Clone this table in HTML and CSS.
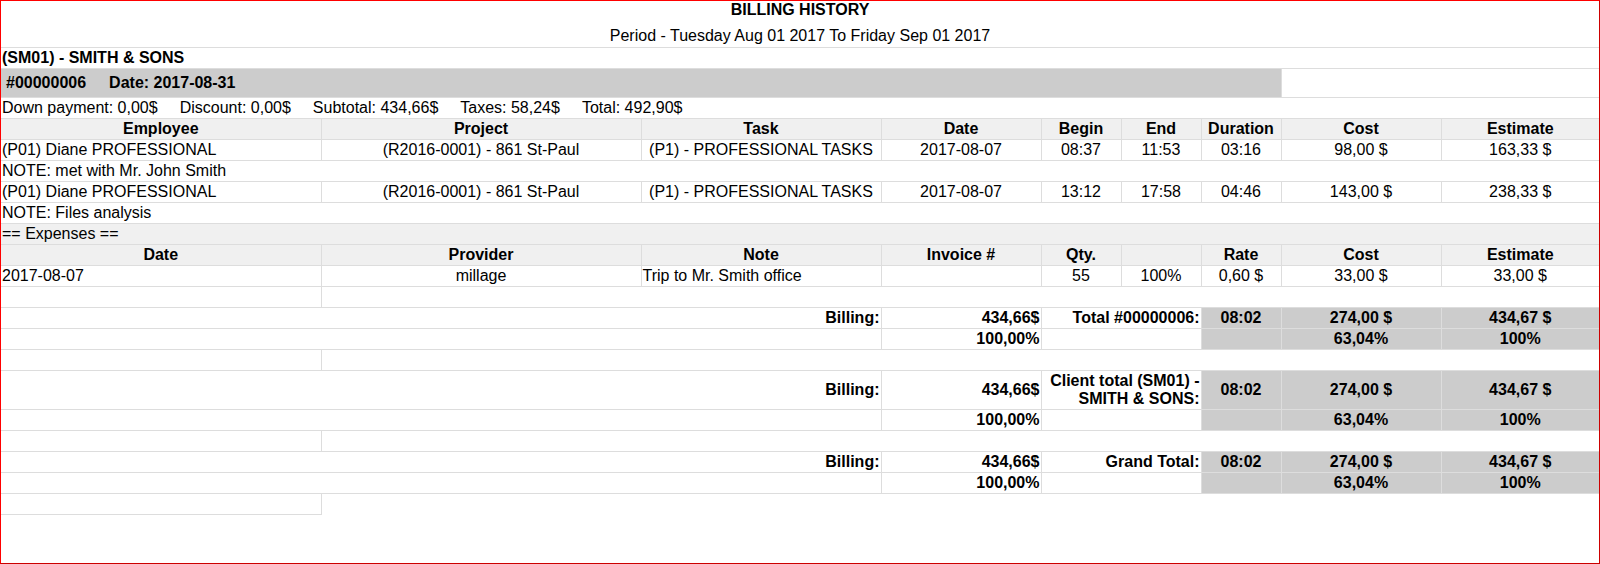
FILE: index.html
```html
<!DOCTYPE html>
<html>
<head>
<meta charset="utf-8">
<title>Billing History</title>
<link rel="stylesheet" href="styles.css">
</head>
<body>
<div class="page">
<table class="report">
  <colgroup>
    <col class="c-emp"><col class="c-proj"><col class="c-task"><col class="c-date"><col class="c-begin"><col class="c-end"><col class="c-dur"><col class="c-cost"><col class="c-est">
  </colgroup>
  <tbody>
    <tr class="title-row"><td colspan="9" class="title">BILLING HISTORY</td></tr>
    <tr class="period-row"><td colspan="9" class="period">Period - Tuesday Aug 01 2017 To Friday Sep 01 2017</td></tr>
    <tr><td colspan="9" class="client">(SM01) - SMITH &amp; SONS</td></tr>
    <tr class="invoice-row">
      <td colspan="7" class="invoice"><span class="inv-no">#00000006</span><span>Date: 2017-08-31</span></td>
      <td colspan="2"></td>
    </tr>
    <tr><td colspan="9" class="summary"><span>Down payment: 0,00$</span><span>Discount: 0,00$</span><span>Subtotal: 434,66$</span><span>Taxes: 58,24$</span><span>Total: 492,90$</span></td></tr>
    <tr class="head">
      <td>Employee</td><td>Project</td><td>Task</td><td>Date</td><td>Begin</td><td>End</td><td>Duration</td><td>Cost</td><td>Estimate</td>
    </tr>
    <tr class="line">
      <td class="left">(P01) Diane PROFESSIONAL</td><td>(R2016-0001) - 861 St-Paul</td><td>(P1) - PROFESSIONAL TASKS</td><td>2017-08-07</td><td>08:37</td><td>11:53</td><td>03:16</td><td>98,00 $</td><td>163,33 $</td>
    </tr>
    <tr><td colspan="9" class="left">NOTE: met with Mr. John Smith</td></tr>
    <tr class="line">
      <td class="left">(P01) Diane PROFESSIONAL</td><td>(R2016-0001) - 861 St-Paul</td><td>(P1) - PROFESSIONAL TASKS</td><td>2017-08-07</td><td>13:12</td><td>17:58</td><td>04:46</td><td>143,00 $</td><td>238,33 $</td>
    </tr>
    <tr><td colspan="9" class="left">NOTE: Files analysis</td></tr>
    <tr class="section"><td colspan="9" class="left">== Expenses ==</td></tr>
    <tr class="head">
      <td>Date</td><td>Provider</td><td>Note</td><td>Invoice #</td><td>Qty.</td><td></td><td>Rate</td><td>Cost</td><td>Estimate</td>
    </tr>
    <tr class="line">
      <td class="left">2017-08-07</td><td>millage</td><td class="left">Trip to Mr. Smith office</td><td></td><td>55</td><td>100%</td><td>0,60 $</td><td>33,00 $</td><td>33,00 $</td>
    </tr>
    <tr class="spacer"><td></td></tr>

    <tr class="total">
      <td colspan="3" class="right">Billing:</td><td class="right">434,66$</td><td colspan="2" class="right">Total #00000006:</td><td class="shade">08:02</td><td class="shade">274,00 $</td><td class="shade">434,67 $</td>
    </tr>
    <tr class="total">
      <td colspan="3"></td><td class="right">100,00%</td><td colspan="2"></td><td class="shade"></td><td class="shade">63,04%</td><td class="shade">100%</td>
    </tr>
    <tr class="spacer"><td></td></tr>

    <tr class="total">
      <td colspan="3" class="right">Billing:</td><td class="right">434,66$</td><td colspan="2" class="right">Client total (SM01) - SMITH &amp; SONS:</td><td class="shade">08:02</td><td class="shade">274,00 $</td><td class="shade">434,67 $</td>
    </tr>
    <tr class="total">
      <td colspan="3"></td><td class="right">100,00%</td><td colspan="2"></td><td class="shade"></td><td class="shade">63,04%</td><td class="shade">100%</td>
    </tr>
    <tr class="spacer"><td></td></tr>

    <tr class="total">
      <td colspan="3" class="right">Billing:</td><td class="right">434,66$</td><td colspan="2" class="right">Grand Total:</td><td class="shade">08:02</td><td class="shade">274,00 $</td><td class="shade">434,67 $</td>
    </tr>
    <tr class="total">
      <td colspan="3"></td><td class="right">100,00%</td><td colspan="2"></td><td class="shade"></td><td class="shade">63,04%</td><td class="shade">100%</td>
    </tr>
    <tr class="spacer"><td></td></tr>
  </tbody>
</table>
</div>
</body>
</html>
```

FILE: styles.css
```css
html, body {
  margin: 0;
  padding: 0;
  background: #fff;
}

.page {
  width: 1600px;
  height: 564px;
  box-sizing: border-box;
  border: 1px solid;
  border-color: #ff0000 #cc0000 #cc0000 #ff0000;
  overflow: hidden;
  font-family: "Liberation Sans", Arial, sans-serif;
  font-size: 16px;
  color: #000;
}

.report {
  width: 1598px;
  table-layout: fixed;
  border-collapse: collapse;
  border: none;
}

.c-emp { width: 320px; }
.c-proj { width: 320px; }
.c-task { width: 240px; }
.c-date { width: 160px; }
.c-begin { width: 80px; }
.c-end { width: 80px; }
.c-dur { width: 80px; }
.c-cost { width: 160px; }
.c-est { width: 158px; }

.report td {
  border: 1px solid #dddddd;
  padding: 1px;
  line-height: 18px;
  height: 18px;
  text-align: center;
  vertical-align: middle;
}

.report tr > td:first-child {
  border-left: none;
}

.report tr > td:last-child {
  border-right: none;
}

.report tr.spacer > td {
  border-right: 1px solid #dddddd;
}

.report td.title {
  border: none;
  font-weight: bold;
  padding: 0 0 8px 0;
}

.report td.period {
  border-top: none;
  padding: 0 0 2px 0;
}

.report td.client {
  text-align: left;
  font-weight: bold;
}

.report td.invoice {
  background: #cccccc;
  text-align: left;
  font-weight: bold;
  padding: 5px;
}

.inv-no {
  margin-right: 23px;
}

.report td.summary {
  text-align: left;
}

.summary span + span {
  margin-left: 22px;
}

.head td {
  background: #f0f0f0;
  font-weight: bold;
}

.section td {
  background: #f0f0f0;
}

.report td.left {
  text-align: left;
}

.report td.right {
  text-align: right;
}

.total td {
  font-weight: bold;
}

.report td.shade {
  background: #cccccc;
}
```
